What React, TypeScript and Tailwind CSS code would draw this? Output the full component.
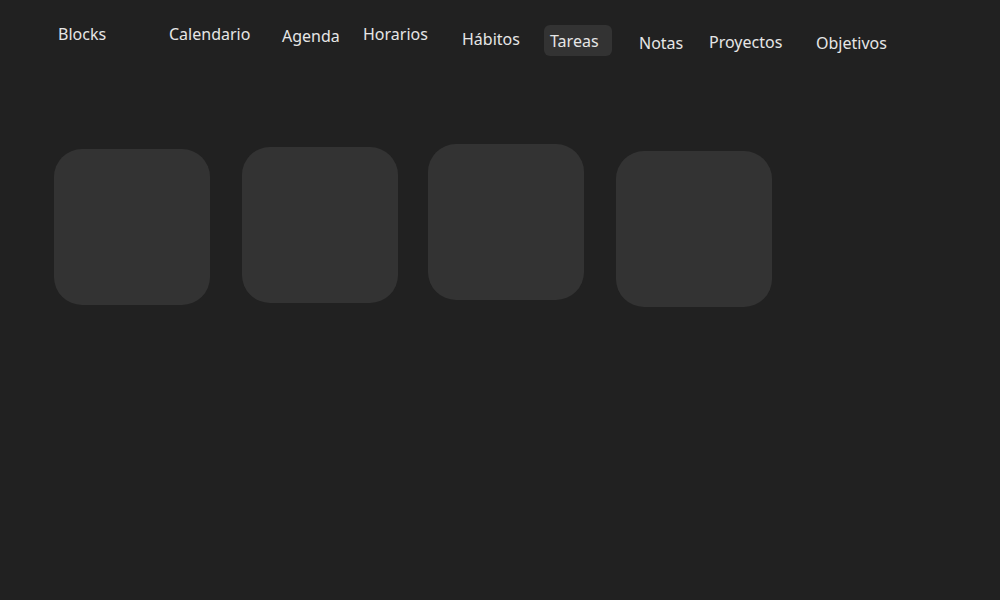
const navItems = [
  { label: "Blocks", slot: "w-[111px]", offset: "mt-0" },
  { label: "Calendario", slot: "w-[113px]", offset: "mt-0" },
  { label: "Agenda", slot: "w-[81px]", offset: "mt-[2px]" },
  { label: "Horarios", slot: "w-[99px]", offset: "mt-0" },
  { label: "Hábitos", slot: "w-[88px]", offset: "mt-[5px]" },
  { label: "Tareas", slot: "w-[89px]", offset: "mt-[7px]", active: true },
  { label: "Notas", slot: "w-[70px]", offset: "mt-[9px]" },
  { label: "Proyectos", slot: "w-[107px]", offset: "mt-[8px]" },
  { label: "Objetivos", slot: "w-[107px]", offset: "mt-[9px]" },
];

// cards sit slightly off-grid, like the reference
const blocks = [
  { id: 1, offset: "mt-[5px]", gap: "ml-0" },
  { id: 2, offset: "mt-[3px]", gap: "ml-[32px]" },
  { id: 3, offset: "mt-0", gap: "ml-[30px]" },
  { id: 4, offset: "mt-[7px]", gap: "ml-[32px]" },
];

export default function App() {
  return (
    <div className="min-h-[600px] w-full bg-[#212121] text-[#e6e6e6] font-['Noto_Sans',sans-serif]">
      <nav className="flex items-start h-[72px] pl-[52px] pt-[18px]">
        {navItems.map((item) => (
          <div key={item.label} className={`${item.slot} shrink-0 flex items-start`}>
            <button
              className={`${item.offset} pl-1.5 pr-[13px] pt-[5px] pb-[3px] rounded-md text-base leading-[23px] whitespace-nowrap ${
                item.active ? "bg-[#333333]" : ""
              }`}
            >
              {item.label}
            </button>
          </div>
        ))}
      </nav>

      <section className="flex items-start pl-[54px] pt-[72px]">
        {blocks.map((b) => (
          <div
            key={b.id}
            className={`${b.offset} ${b.gap} w-[156px] h-[156px] shrink-0 rounded-[28px] bg-[#333333]`}
          />
        ))}
      </section>
    </div>
  );
}
